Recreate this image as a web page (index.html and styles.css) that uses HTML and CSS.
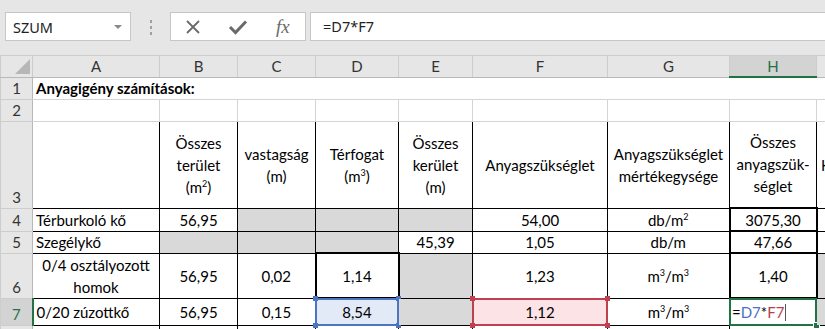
FILE: index.html
```html
<!DOCTYPE html>
<html lang="hu">
<head>
    <meta charset="UTF-8">
    <meta name="viewport" content="width=device-width, initial-scale=1.0">
    <title>Anyagigény számítások</title>
    <link rel="stylesheet" href="styles.css">
</head>
<body>
    <div class="toolbar">
        <div class="namebox">
            <span>SZUM</span>
            <span class="caret"></span>
        </div>
        <div class="grip"><i></i><i></i><i></i></div>
        <div class="fx-buttons">
            <svg class="icon" width="16" height="16" viewBox="0 0 16 16">
                <path d="M2 2 L14 14 M14 2 L2 14" stroke="#6a6a6a" stroke-width="1.8" fill="none"/>
            </svg>
            <svg class="icon" width="20" height="16" viewBox="0 0 20 16">
                <path d="M2 8 L7.5 13.5 L18 2.5" stroke="#6a6a6a" stroke-width="3" fill="none"/>
            </svg>
            <span class="fx">fx</span>
        </div>
        <div class="formula">=D7*F7</div>
    </div>

    <table class="sheet">
        <colgroup>
            <col class="c-hd">
            <col class="c-a">
            <col class="c-b">
            <col class="c-c">
            <col class="c-d">
            <col class="c-e">
            <col class="c-f">
            <col class="c-g">
            <col class="c-h">
            <col class="c-i">
        </colgroup>
        <tr class="r-hd">
            <th class="corner"><span class="tri"></span></th>
            <th>A</th><th>B</th><th>C</th><th>D</th><th>E</th><th>F</th><th>G</th>
            <th class="col-sel">H</th>
            <th>I</th>
        </tr>
        <tr class="r-1">
            <th class="rn">1</th>
            <td class="title" colspan="9">Anyagigény számítások:</td>
        </tr>
        <tr class="r-2">
            <th class="rn">2</th>
            <td></td><td></td><td></td><td></td><td></td><td></td><td></td><td></td><td></td>
        </tr>
        <tr class="r-3 t">
            <th class="rn">3</th>
            <td></td>
            <td class="c wrap">Összes terület (m<sup>2</sup>)</td>
            <td class="c wrap">vastagság (m)</td>
            <td class="c wrap">Térfogat (m<sup>3</sup>)</td>
            <td class="c wrap">Összes kerület (m)</td>
            <td class="c">Anyagszükséglet</td>
            <td class="c wrap">Anyagszükséglet mértékegysége</td>
            <td class="c wrap">Összes anyagszük-séglet</td>
            <td class="clip">Költség</td>
        </tr>
        <tr class="r-4 t">
            <th class="rn">4</th>
            <td>Térburkoló kő</td>
            <td class="c">56,95</td>
            <td class="gray"></td>
            <td class="gray"></td>
            <td class="gray"></td>
            <td class="c">54,00</td>
            <td class="c">db/m<sup>2</sup></td>
            <td class="c thick">3075,30</td>
            <td></td>
        </tr>
        <tr class="r-5 t">
            <th class="rn">5</th>
            <td>Szegélykő</td>
            <td class="gray"></td>
            <td class="gray"></td>
            <td class="gray"></td>
            <td class="c">45,39</td>
            <td class="c">1,05</td>
            <td class="c">db/m</td>
            <td class="c thick">47,66</td>
            <td></td>
        </tr>
        <tr class="r-6 t">
            <th class="rn">6</th>
            <td class="c wrap">0/4 osztályozott homok</td>
            <td class="c">56,95</td>
            <td class="c">0,02</td>
            <td class="c thick">1,14</td>
            <td class="gray"></td>
            <td class="c">1,23</td>
            <td class="c">m<sup>3</sup>/m<sup>3</sup></td>
            <td class="c thick">1,40</td>
            <td class="gray"></td>
        </tr>
        <tr class="r-7 t">
            <th class="rn row-sel">7</th>
            <td>0/20 zúzottkő</td>
            <td class="c">56,95</td>
            <td class="c">0,15</td>
            <td class="c ref-blue">8,54<div class="ref"><i class="tl"></i><i class="tr"></i><i class="bl"></i><i class="br"></i></div></td>
            <td class="gray"></td>
            <td class="c ref-red">1,12<div class="ref"><i class="tl"></i><i class="tr"></i><i class="bl"></i><i class="br"></i></div></td>
            <td class="c">m<sup>3</sup>/m<sup>3</sup></td>
            <td class="active"><span>=</span><span class="blue">D7</span><span>*</span><span class="red">F7</span><span class="cursor"></span><div class="sel"><i></i></div></td>
            <td class="gray"></td>
        </tr>
        <tr class="r-8 t">
            <th class="rn">8</th>
            <td></td><td></td><td></td><td></td><td></td><td></td><td></td><td></td><td></td>
        </tr>
    </table>
</body>
</html>
```

FILE: styles.css
```css
body {
    margin: 0;
    background-color: #ffffff;
    overflow: hidden;
    font-family: Lato, "Noto Sans", sans-serif;
}

/* formula bar */

.toolbar {
    display: flex;
    align-items: flex-start;
    height: 55px;
    box-sizing: border-box;
    padding: 12px 0 0 5px;
    background-color: #e6e6e6;
}

.namebox {
    display: flex;
    align-items: center;
    justify-content: space-between;
    width: 126px;
    height: 29px;
    box-sizing: border-box;
    padding: 0 8px 0 7px;
    background-color: #ffffff;
    border: 1px solid #c6c6c6;
    font-family: "Noto Sans", sans-serif;
    font-size: 14.5px;
    color: #222;
}

.caret {
    width: 0;
    height: 0;
    border-left: 4px solid transparent;
    border-right: 4px solid transparent;
    border-top: 4px solid #8a8a8a;
}

.grip {
    display: flex;
    flex-direction: column;
    gap: 3px;
    width: 39px;
    padding-top: 8px;
    align-items: center;
}

.grip i {
    display: block;
    width: 2px;
    height: 3px;
    background-color: #a0a0a0;
}

.fx-buttons {
    display: flex;
    align-items: center;
    width: 136px;
    height: 29px;
    box-sizing: border-box;
    padding-left: 14px;
    gap: 27px;
    background-color: #ffffff;
    border: 1px solid #c6c6c6;
}

.fx {
    font-family: "Liberation Serif", serif;
    font-style: italic;
    font-size: 19px;
    color: #6a6a6a;
    margin-left: 1px;
}

.formula {
    flex: 1;
    height: 29px;
    margin-left: 4px;
    box-sizing: border-box;
    padding-left: 12px;
    line-height: 27px;
    background-color: #ffffff;
    border: 1px solid #c6c6c6;
    border-right: none;
    font-family: "Noto Sans", sans-serif;
    font-size: 14.5px;
    color: #222;
}

/* sheet grid */

.sheet {
    border-collapse: collapse;
    table-layout: fixed;
    width: 900px;
    font-size: 15px;
}

.c-hd { width: 32px; }
.c-a { width: 127px; }
.c-b { width: 78px; }
.c-c { width: 78px; }
.c-d { width: 83px; }
.c-e { width: 74px; }
.c-f { width: 135px; }
.c-g { width: 122px; }
.c-h { width: 87px; }
.c-i { width: 84px; }

.sheet th {
    background-color: #e6e6e6;
    font-weight: normal;
    color: #333;
    padding: 0;
    border: 1px solid #cdcdcd;
}

.r-hd th {
    height: 20px;
    border-bottom-color: #b8b8b8;
}

.corner {
    position: relative;
}

.tri {
    position: absolute;
    right: 2px;
    bottom: 3px;
    width: 0;
    height: 0;
    border-left: 15px solid transparent;
    border-bottom: 15px solid #b7b7b7;
}

.col-sel {
    background-color: #d3d3d3 !important;
    color: #217346 !important;
    border-bottom: 2px solid #217346 !important;
}

.rn {
    vertical-align: bottom;
    line-height: 21px;
    border-right-color: #b8b8b8 !important;
}

.row-sel {
    background-color: #d3d3d3 !important;
    color: #217346 !important;
    border-right: 2px solid #217346 !important;
}

.sheet td {
    position: relative;
    padding: 0 3px;
    border: 1px solid #d4d4d4;
    white-space: nowrap;
    vertical-align: middle;
    color: #000;
    line-height: 20px;
}

.r-1 { height: 21px; }
.r-2 { height: 21px; }
.r-3 { height: 87px; }
.r-4 { height: 23px; }
.r-5 { height: 22px; }
.r-6 { height: 42px; }
.r-7 { height: 27px; }
.r-8 { height: 20px; }

.sheet .r-1 td {
    font-weight: bold;
    padding-left: 3px;
}

.sheet .t td {
    border-color: #000;
}

.sheet td.c {
    text-align: center;
}

.sheet td.wrap {
    white-space: normal;
    line-height: 22px;
}

.sheet td.clip {
    padding-left: 4px;
    overflow: hidden;
}

.sheet td.gray {
    background-color: #d9d9d9;
}

.sheet td.thick {
    border-width: 2px;
}

sup {
    font-size: 9px;
    line-height: 0;
    vertical-align: 6px;
}

/* formula references and active cell */

.ref {
    position: absolute;
    top: -1px;
    left: -1px;
    right: -1px;
    bottom: -1px;
    border: 2px solid;
}

.ref i {
    position: absolute;
    width: 5px;
    height: 5px;
    background-color: currentColor;
}

.ref .tl { top: -4px; left: -4px; }
.ref .tr { top: -4px; right: -4px; }
.ref .bl { bottom: -4px; left: -4px; }
.ref .br { bottom: -4px; right: -4px; }

.sheet td.ref-blue {
    background-color: #e2eaf7;
}

.ref-blue .ref {
    color: #4a75c0;
    border-color: #4a75c0;
}

.sheet td.ref-red {
    background-color: #fbe3e6;
}

.ref-red .ref {
    color: #c0404f;
    border-color: #c0404f;
}

.sheet td.active {
    padding-left: 2px;
}

.blue { color: #4472c4; }
.red { color: #b8404c; }

.cursor {
    display: inline-block;
    width: 1px;
    height: 17px;
    margin-left: 1px;
    vertical-align: -3px;
    background-color: #555;
}

.sel {
    position: absolute;
    top: -1px;
    left: -1px;
    right: -1px;
    bottom: -1px;
    border: 2px solid #217346;
}

.sel i {
    position: absolute;
    right: -5px;
    bottom: -5px;
    width: 5px;
    height: 5px;
    background-color: #217346;
    border: 1px solid #ffffff;
}
```
